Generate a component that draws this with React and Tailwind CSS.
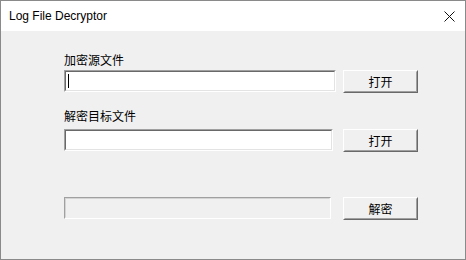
import React from "react";

const cjk = { fontFamily: '"Noto Sans CJK SC", "Noto Sans", sans-serif' };

function Sunken({ width, disabled, children }) {
  // classic win32 sunken edit box
  return (
    <div
      className={`h-[22px] border border-t-[#a0a0a0] border-l-[#a0a0a0] border-b-white border-r-white ${width}`}
    >
      <div
        className={`h-full w-full border ${
          disabled
            ? "border-t-[#d4d4d4] border-l-[#d4d4d4] border-b-[#f0f0f0] border-r-[#f0f0f0] bg-[#f0f0f0]"
            : "border-t-[#696969] border-l-[#696969] border-b-[#e3e3e3] border-r-[#e3e3e3] bg-white"
        } flex items-center`}
      >
        {children}
      </div>
    </div>
  );
}

function Btn({ label }) {
  return (
    <button className="h-[23px] w-[75px] border border-t-white border-l-white border-b-[#696969] border-r-[#696969] p-0">
      <div
        className="flex h-full w-full items-center justify-center border border-t-[#f0f0f0] border-l-[#f0f0f0] border-b-[#a0a0a0] border-r-[#a0a0a0] bg-[#f0f0f0] text-[12px] leading-none text-black"
        style={cjk}
      >
        {label}
      </div>
    </button>
  );
}

export default function App() {
  return (
    <div className="flex h-[260px] w-[466px] flex-col border border-[#8a8a8a] bg-[#f0f0f0]">
      {/* title bar */}
      <div className="flex h-[30px] items-center justify-between bg-white pl-2 pr-[10px]">
        <span
          className="text-[12px] text-black"
          style={{ fontFamily: '"Liberation Sans", Arial, sans-serif' }}
        >
          Log File Decryptor
        </span>
        <svg width="11" height="11" viewBox="0 0 11 11">
          <path d="M0.5 0.5 L10.5 10.5 M10.5 0.5 L0.5 10.5" stroke="#111" strokeWidth="1" />
        </svg>
      </div>

      {/* body */}
      <div className="flex flex-col pl-[63px]">
        <div className="mt-[21px] h-[16px] text-[12px] leading-[16px] text-black" style={cjk}>
          加密源文件
        </div>
        <div className="mt-[2px] flex items-start gap-[7px]">
          <Sunken width="w-[272px]">
            <div className="ml-[2px] h-[14px] w-px bg-black" />
          </Sunken>
          <Btn label="打开" />
        </div>

        <div className="mt-[15px] h-[16px] text-[12px] leading-[16px] text-black" style={cjk}>
          解密目标文件
        </div>
        <div className="mt-[5px] flex items-start gap-[10px]">
          <Sunken width="w-[269px]" />
          <Btn label="打开" />
        </div>

        <div className="mt-[45px] flex items-start gap-[12px]">
          <Sunken width="w-[267px]" disabled />
          <Btn label="解密" />
        </div>
      </div>
    </div>
  );
}
